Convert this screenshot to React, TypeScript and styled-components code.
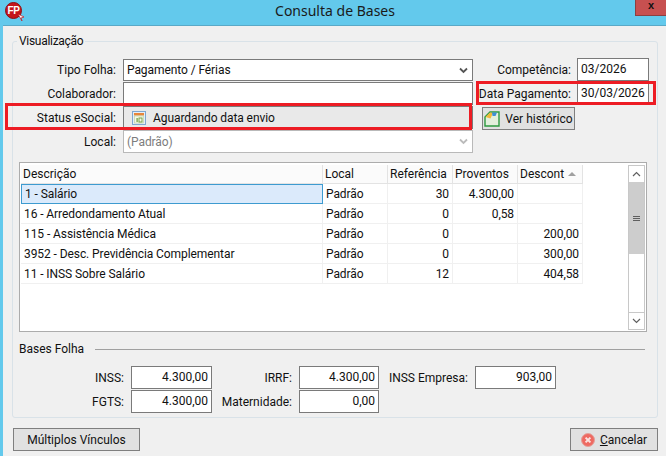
import styled, { createGlobalStyle } from 'styled-components';

const GlobalStyle = createGlobalStyle`
  html, body {
    margin: 0;
    padding: 0;
    background: #f0f0f0;
  }

  body {
    font-family: Roboto, "Liberation Sans", sans-serif;
    font-size: 12px;
    color: #111;
  }
`;

const Window = styled.div`
  position: relative;
  box-sizing: border-box;
  width: 666px;
  height: 456px;
  overflow: hidden;
  display: flex;
  flex-direction: column;
  background: #f0f0f0;
  border-left: 3px solid #63c9ec;
`;

const TitleBar = styled.div`
  flex: none;
  height: 25px;
  margin-left: -3px;
  display: grid;
  grid-template-columns: 60px 1fr 60px;
  background: #63c9ec;
  border-bottom: 1px solid #5aa9c7;
`;

const AppLogo = styled.div`
  position: relative;
  width: 15px;
  height: 15px;
  margin: 2px 0 0 5px;
  border-radius: 50%;
  background: #c4161c;
  border: 1px solid #8e0e12;
  color: #fff;
  font: bold 10px/15px "Liberation Sans", sans-serif;
  letter-spacing: -0.5px;
  text-align: center;
`;

const LogoBadge = styled.svg`
  position: absolute;
  right: -4px;
  bottom: -3px;
`;

const Title = styled.div`
  padding-left: 4px;
  text-align: center;
  font-family: "Noto Sans", sans-serif;
  font-size: 14px;
  line-height: 22px;
  color: #1a1a1a;
`;

const CloseButton = styled.div`
  justify-self: end;
  box-sizing: border-box;
  width: 31px;
  height: 16px;
  background: #c75050;
  border: 1px solid #8c4040;
  border-top: none;
  border-right: none;
  color: #111;
  font: bold 11px/11px "Liberation Sans", sans-serif;
  text-align: center;
`;

const Content = styled.div`
  flex: 1;
  display: flex;
  flex-direction: column;
  padding: 7px 8px 5px 9px;
`;

const GroupBox = styled.fieldset`
  box-sizing: border-box;
  width: 646px;
  height: 385px;
  margin: 0;
  padding: 10px 0 0;
  border: 1px solid #d9e2e8;
  border-radius: 3px;
  background: #f0f0f0;
`;

const GroupLegend = styled.legend`
  margin-left: 4px;
  padding: 0 2px;
  font-size: 12px;
  line-height: 16px;
  letter-spacing: -0.3px;
`;

const TopSection = styled.div`
  display: flex;
  height: 97px;
`;

const LeftForm = styled.div`
  display: grid;
  grid-template-columns: 103px 350px;
  grid-auto-rows: min-content;
  column-gap: 7px;
  row-gap: 1px;
  align-items: center;
`;

const RightForm = styled.div`
  margin: -1px 0 0 8px;
  display: flex;
  flex-direction: column;
  align-items: flex-start;
`;

const Label = styled.label`
  text-align: right;
  white-space: nowrap;
`;

const RightRow = styled.div`
  display: flex;
  align-items: center;
  justify-content: flex-end;
  gap: 6px;
  width: 168px;
  margin-bottom: 1px;
`;

const Field = styled.div<{ $disabled?: boolean; $height?: number }>`
  box-sizing: border-box;
  height: ${p => p.$height ?? 23}px;
  display: flex;
  align-items: center;
  justify-content: space-between;
  padding: 0 4px 0 3px;
  background: #fff;
  border: 1px solid ${p => (p.$disabled ? '#b9b9b9' : '#7a7a7a')};
  color: ${p => (p.$disabled ? '#7d7d7d' : '#111')};
  letter-spacing: -0.08px;
`;

const StatusField = styled(Field)`
  justify-content: flex-start;
  gap: 7px;
  padding-left: 8px;
  background: #e9e9e9;
`;

const TextInput = styled.input<{ $width: number; $align?: string }>`
  box-sizing: border-box;
  width: ${p => p.$width}px;
  height: 23px;
  margin: 0;
  padding: 0 3px 1px;
  background: #fff;
  border: 1px solid #7a7a7a;
  border-radius: 0;
  outline: none;
  font: inherit;
  color: #111;
  text-align: ${p => p.$align ?? 'left'};
`;

const Button = styled.button`
  box-sizing: border-box;
  height: 23px;
  margin: 0;
  display: inline-flex;
  align-items: center;
  justify-content: center;
  gap: 5px;
  background: #e1e1e1;
  border: 1px solid #7f7f7f;
  border-radius: 0;
  font: inherit;
  color: #111;
  white-space: nowrap;
`;

const HistoryButton = styled(Button)`
  width: 93px;
  margin: 1px 0 0 1px;
  padding: 0;
`;

const TableFrame = styled.div`
  box-sizing: border-box;
  display: flex;
  justify-content: space-between;
  width: 628px;
  height: 170px;
  margin: 6px 0 0 6px;
  padding: 2px 1px 1px 1px;
  background: #fff;
  border: 1px solid #acacac;
`;

const Table = styled.table`
  border-collapse: separate;
  border-spacing: 0;
  table-layout: fixed;
  width: 562px;
  height: min-content;

  & th {
    height: 19px;
    padding: 0 2px 0 2px;
    box-sizing: border-box;
    font-weight: normal;
    text-align: left;
    background: #fbfbfb;
    border-right: 1px solid #e3e3e3;
    border-bottom: 1px solid #e3e3e3;
    white-space: nowrap;
    overflow: hidden;
  }

  & td {
    height: 20px;
    box-sizing: border-box;
    padding: 0 3px;
    border-right: 1px solid #f0f0f0;
    border-bottom: 1px solid #f0f0f0;
    letter-spacing: -0.08px;
    white-space: nowrap;
    overflow: hidden;
  }
`;

const NumberCell = styled.td`
  text-align: right;
`;

const SelectedCell = styled.td`
  && {
    background: #dbeafb;
    border: 1px solid #3d9bd0;
  }
`;

const SortArrow = styled.span`
  display: inline-block;
  margin-left: 4px;
  width: 0;
  height: 0;
  vertical-align: 2px;
  border-left: 4px solid transparent;
  border-right: 4px solid transparent;
  border-bottom: 4px solid #a0a0a0;
`;

const ScrollBar = styled.div`
  box-sizing: border-box;
  width: 17px;
  display: flex;
  flex-direction: column;
  background: #fff;
  border: 1px solid #c8c8c8;
`;

const ScrollButton = styled.div`
  flex: none;
  height: 16px;
  display: flex;
  align-items: center;
  justify-content: center;
`;

const ScrollThumb = styled.div`
  flex: none;
  height: 72px;
  display: flex;
  flex-direction: column;
  align-items: center;
  justify-content: center;
  gap: 1px;
  background: #cdcdcd;
`;

const GripLine = styled.div`
  width: 7px;
  height: 1px;
  background: #5f5f5f;
`;

const ScrollTrack = styled.div`
  flex: 1;
  border-bottom: 1px solid #c8c8c8;
`;

const SectionHeader = styled.div`
  display: flex;
  align-items: center;
  gap: 11px;
  margin: 9px 12px 0 6px;
  line-height: 16px;
`;

const SectionLine = styled.div`
  flex: 1;
  height: 1px;
  background: #a0a0a0;
`;

const BasesGrid = styled.div`
  display: grid;
  grid-template-columns: 112px 81px 87px 80px 96px 81px;
  grid-auto-rows: 23px;
  row-gap: 1px;
  column-gap: 0;
  align-items: center;
  margin: 9px 0 0 6px;

  & ${Label} {
    padding-right: 7px;
  }
`;

const BottomBar = styled.div`
  display: flex;
  justify-content: space-between;
  margin: 10px 0 0 1px;
`;

const VinculosButton = styled(Button)`
  width: 127px;
`;

const CancelButton = styled(Button)`
  width: 88px;
`;

const Mnemonic = styled.span`
  text-decoration: underline;
`;

// Marcações vermelhas feitas por cima da tela
const Highlight = styled.div<{ $left: number; $top: number; $width: number; $height: number }>`
  position: absolute;
  box-sizing: border-box;
  left: ${p => p.$left}px;
  top: ${p => p.$top}px;
  width: ${p => p.$width}px;
  height: ${p => p.$height}px;
  border: 3px solid #ed1c24;
  pointer-events: none;
`;

function Chevron({ color = '#555' }: { color?: string }) {
  return (
    <svg width="9" height="7" viewBox="0 0 9 7">
      <path d="M1 1.5 4.5 5 8 1.5" fill="none" stroke={color} strokeWidth="1.8" />
    </svg>
  );
}

function CalendarIcon() {
  return (
    <svg width="14" height="14" viewBox="0 0 14 14">
      <rect x="0.5" y="0.5" width="13" height="13" fill="#e4eef8" stroke="#7fa6cf" />
      <rect x="2" y="2" width="10" height="2.5" fill="#e8863a" />
      <rect x="2.5" y="5" width="9" height="7" fill="#f4f8e8" stroke="#b9cf9a" strokeWidth="0.6" />
      <rect x="4.5" y="7" width="1.2" height="4" fill="#6d9a3a" />
      <rect x="7" y="7" width="3" height="4" fill="none" stroke="#6d9a3a" strokeWidth="0.9" />
    </svg>
  );
}

function HistoryIcon() {
  return (
    <svg width="16" height="16" viewBox="0 0 16 16">
      <path d="M1 6 6 1H15V15H1Z" fill="#e3efdc" stroke="#2c9a3f" strokeWidth="1.4" />
      <path d="M6 1.5 1.5 6 6.5 7.5 9 2Z" fill="#f0b93a" />
      <path d="M8 1.5H13L11.5 5H8.5Z" fill="#3d8fd6" />
    </svg>
  );
}

function CancelIcon() {
  return (
    <svg width="14" height="14" viewBox="0 0 14 14">
      <circle cx="7" cy="7" r="6.5" fill="#ee6a62" stroke="#e3a09a" />
      <path d="M4.6 4.6 9.4 9.4M9.4 4.6 4.6 9.4" stroke="#fbe3e0" strokeWidth="2" />
    </svg>
  );
}

const rows = [
  { name: '1 - Salário', ref: '30', prov: '4.300,00', desc: '' },
  { name: '16 - Arredondamento Atual', ref: '0', prov: '0,58', desc: '' },
  { name: '115 - Assistência Médica', ref: '0', prov: '', desc: '200,00' },
  { name: '3952 - Desc. Previdência Complementar', ref: '0', prov: '', desc: '300,00' },
  { name: '11 - INSS Sobre Salário', ref: '12', prov: '', desc: '404,58' },
];

export default function App() {
  return (
    <Window>
      <GlobalStyle />
      <TitleBar>
        <AppLogo>
          FP
          <LogoBadge width="7" height="7" viewBox="0 0 7 7">
            <path d="M0 0 6 3 3 4 4 7Z" fill="#fff" stroke="#c4161c" strokeWidth="0.7" />
          </LogoBadge>
        </AppLogo>
        <Title>Consulta de Bases</Title>
        <CloseButton>x</CloseButton>
      </TitleBar>
      <Content>
        <GroupBox>
          <GroupLegend>Visualização</GroupLegend>
          <TopSection>
            <LeftForm>
              <Label>Tipo Folha:</Label>
              <Field $height={22}>
                Pagamento / Férias
                <Chevron />
              </Field>
              <Label>Colaborador:</Label>
              <Field />
              <Label>Status eSocial:</Label>
              <StatusField>
                <CalendarIcon />
                Aguardando data envio
              </StatusField>
              <Label>Local:</Label>
              <Field $disabled>
                (Padrão)
                <Chevron color="#bbb" />
              </Field>
            </LeftForm>
            <RightForm>
              <RightRow>
                <Label>Competência:</Label>
                <TextInput $width={72} readOnly value="03/2026" />
              </RightRow>
              <RightRow>
                <Label>Data Pagamento:</Label>
                <TextInput $width={72} readOnly value="30/03/2026" />
              </RightRow>
              <HistoryButton>
                <HistoryIcon />
                Ver histórico
              </HistoryButton>
            </RightForm>
          </TopSection>

          <TableFrame>
            <Table>
              <colgroup>
                <col width="302" />
                <col width="65" />
                <col width="65" />
                <col width="65" />
                <col width="65" />
              </colgroup>
              <thead>
                <tr>
                  <th>Descrição</th>
                  <th>Local</th>
                  <th>Referência</th>
                  <th>Proventos</th>
                  <th>
                    Descont
                    <SortArrow />
                  </th>
                </tr>
              </thead>
              <tbody>
                {rows.map((row, index) => (
                  <tr key={row.name}>
                    {index === 0 ? <SelectedCell>{row.name}</SelectedCell> : <td>{row.name}</td>}
                    <td>Padrão</td>
                    <NumberCell>{row.ref}</NumberCell>
                    <NumberCell>{row.prov}</NumberCell>
                    <NumberCell>{row.desc}</NumberCell>
                  </tr>
                ))}
              </tbody>
            </Table>
            <ScrollBar>
              <ScrollButton>
                <svg width="9" height="6" viewBox="0 0 9 6">
                  <path d="M1 5 4.5 1.5 8 5" fill="none" stroke="#606060" strokeWidth="1.2" />
                </svg>
              </ScrollButton>
              <ScrollThumb>
                <GripLine />
                <GripLine />
                <GripLine />
              </ScrollThumb>
              <ScrollTrack />
              <ScrollButton>
                <svg width="9" height="6" viewBox="0 0 9 6">
                  <path d="M1 1 4.5 4.5 8 1" fill="none" stroke="#606060" strokeWidth="1.2" />
                </svg>
              </ScrollButton>
            </ScrollBar>
          </TableFrame>

          <SectionHeader>
            Bases Folha
            <SectionLine />
          </SectionHeader>
          <BasesGrid>
            <Label>INSS:</Label>
            <TextInput $width={81} $align="right" readOnly value="4.300,00" />
            <Label>IRRF:</Label>
            <TextInput $width={80} $align="right" readOnly value="4.300,00" />
            <Label>INSS Empresa:</Label>
            <TextInput $width={81} $align="right" readOnly value="903,00" />
            <Label>FGTS:</Label>
            <TextInput $width={81} $align="right" readOnly value="4.300,00" />
            <Label>Maternidade:</Label>
            <TextInput $width={80} $align="right" readOnly value="0,00" />
          </BasesGrid>
        </GroupBox>
        <BottomBar>
          <VinculosButton>Múltiplos Vínculos</VinculosButton>
          <CancelButton>
            <CancelIcon />
            <span>
              <Mnemonic>C</Mnemonic>ancelar
            </span>
          </CancelButton>
        </BottomBar>
      </Content>
      <Highlight $left={2} $top={103} $width={467} $height={27} />
      <Highlight $left={473} $top={81} $width={180} $height={24} />
    </Window>
  );
}
